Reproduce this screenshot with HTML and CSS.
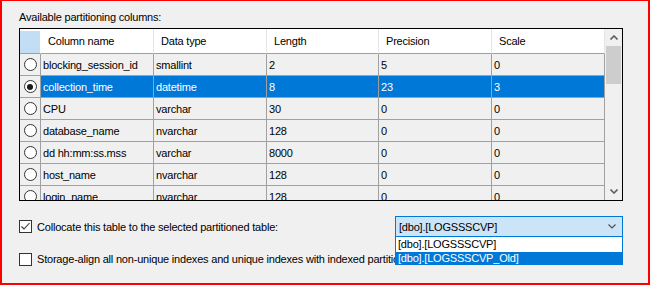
FILE: index.html
```html
<!DOCTYPE html>
<html lang="en">
<head>
  <meta charset="UTF-8">
  <title>Partitioning columns</title>
  <link rel="stylesheet" href="styles.css">
</head>
<body>
  <div class="page">
    <div class="caption">Available partitioning columns:</div>

    <div class="grid">
      <div class="grid__body">
        <div class="grid__row grid__row--head">
          <div class="cell cell--corner"></div>
          <div class="cell">Column name</div>
          <div class="cell">Data type</div>
          <div class="cell">Length</div>
          <div class="cell">Precision</div>
          <div class="cell">Scale</div>
        </div>
        <div class="grid__row">
          <div class="cell cell--radio"><span class="radio"></span></div>
          <div class="cell">blocking_session_id</div>
          <div class="cell">smallint</div>
          <div class="cell">2</div>
          <div class="cell">5</div>
          <div class="cell">0</div>
        </div>
        <div class="grid__row grid__row--selected">
          <div class="cell cell--radio"><span class="radio radio--on"></span></div>
          <div class="cell">collection_time</div>
          <div class="cell">datetime</div>
          <div class="cell">8</div>
          <div class="cell">23</div>
          <div class="cell">3</div>
        </div>
        <div class="grid__row">
          <div class="cell cell--radio"><span class="radio"></span></div>
          <div class="cell">CPU</div>
          <div class="cell">varchar</div>
          <div class="cell">30</div>
          <div class="cell">0</div>
          <div class="cell">0</div>
        </div>
        <div class="grid__row">
          <div class="cell cell--radio"><span class="radio"></span></div>
          <div class="cell">database_name</div>
          <div class="cell">nvarchar</div>
          <div class="cell">128</div>
          <div class="cell">0</div>
          <div class="cell">0</div>
        </div>
        <div class="grid__row">
          <div class="cell cell--radio"><span class="radio"></span></div>
          <div class="cell">dd hh:mm:ss.mss</div>
          <div class="cell">varchar</div>
          <div class="cell">8000</div>
          <div class="cell">0</div>
          <div class="cell">0</div>
        </div>
        <div class="grid__row">
          <div class="cell cell--radio"><span class="radio"></span></div>
          <div class="cell">host_name</div>
          <div class="cell">nvarchar</div>
          <div class="cell">128</div>
          <div class="cell">0</div>
          <div class="cell">0</div>
        </div>
        <div class="grid__row">
          <div class="cell cell--radio"><span class="radio"></span></div>
          <div class="cell">login_name</div>
          <div class="cell">nvarchar</div>
          <div class="cell">128</div>
          <div class="cell">0</div>
          <div class="cell">0</div>
        </div>
      </div>

      <div class="scrollbar">
        <div class="scrollbar__btn">
          <svg width="8" height="5" viewBox="0 0 8 5"><polyline points="0.5,4.5 4,1 7.5,4.5" fill="none" stroke="#606060" stroke-width="1.6"/></svg>
        </div>
        <div class="scrollbar__track"><div class="scrollbar__thumb"></div></div>
        <div class="scrollbar__btn">
          <svg width="8" height="5" viewBox="0 0 8 5"><polyline points="0.5,0.5 4,4 7.5,0.5" fill="none" stroke="#606060" stroke-width="1.6"/></svg>
        </div>
      </div>
    </div>

    <div class="option option--collocate">
      <div class="check">
        <span class="check__box">
          <svg width="11" height="11" viewBox="0 0 11 11"><polyline points="1.5,5.5 4,8 9.5,2" fill="none" stroke="#333" stroke-width="1.1"/></svg>
        </span>
        Collocate this table to the selected partitioned table:
      </div>
      <div class="combo">
        <div class="combo__field">
          <span>[dbo].[LOGSSSCVP]</span>
          <svg width="8" height="5" viewBox="0 0 8 5"><polyline points="0.5,0.5 4,4 7.5,0.5" fill="none" stroke="#505050" stroke-width="1.2"/></svg>
        </div>
        <ul class="combo__list">
          <li class="combo__item">[dbo].[LOGSSSCVP]</li>
          <li class="combo__item combo__item--active">[dbo].[LOGSSSCVP_Old]</li>
        </ul>
      </div>
    </div>

    <div class="option">
      <div class="check check--under-list">
        <span class="check__box"></span>
        Storage-align all non-unique indexes and unique indexes with indexed partition column
      </div>
    </div>
  </div>
</body>
</html>
```

FILE: styles.css
```css
body {
  margin: 0;
  background: #f0f0f0;
  font-family: "Liberation Sans", Arial, sans-serif;
  font-size: 11px;
  letter-spacing: -0.2px;
  color: #000;
}
.page {
  width: 650px;
  height: 285px;
  box-sizing: border-box;
  border: 2px solid #ff0000;
  border-top-width: 1px;
  padding: 8px 0 0 17px;
  overflow: hidden;
}
.caption {
  line-height: 16px;
  margin-bottom: 3px;
}

/* data grid */
.grid {
  display: flex;
  width: 604px;
  height: 173px;
  box-sizing: border-box;
  border: 1px solid #000;
  overflow: hidden;
}
.grid__body {
  flex: 1;
  overflow: hidden;
}
.grid__row {
  display: grid;
  grid-template-columns: 21px 113px 113px 112px 113px 113px;
  height: 22px;
}
.cell {
  display: flex;
  align-items: center;
  box-sizing: border-box;
  padding-left: 2px;
  border-right: 1px solid #a0a0a0;
  border-bottom: 1px solid #a0a0a0;
  white-space: nowrap;
  overflow: hidden;
}
.grid__row--head {
  height: 25px;
  background: #fff;
}
.grid__row--head .cell {
  padding-left: 7px;
  border-right-color: #e5e5e5;
}
.grid__row--head .cell--corner {
  background: #c3ddf4;
  border-right-color: #fff;
  border-top: 2px solid #fff;
}
.grid__row--selected .cell {
  background: #0078d7;
  color: #fff;
}
.grid__row--selected .cell--radio {
  background: #f0f0f0;
}
.cell--radio {
  justify-content: center;
  padding-left: 0;
}
.radio {
  width: 13px;
  height: 13px;
  box-sizing: border-box;
  border: 1px solid #333;
  border-radius: 50%;
  background: #fff;
  display: flex;
  align-items: center;
  justify-content: center;
}
.radio--on::after {
  content: "";
  width: 6px;
  height: 6px;
  border-radius: 50%;
  background: #1a1a1a;
}

/* scrollbar */
.scrollbar {
  width: 17px;
  display: flex;
  flex-direction: column;
  background: #f0f0f0;
}
.scrollbar__btn {
  height: 17px;
  display: flex;
  align-items: center;
  justify-content: center;
}
.scrollbar__track {
  flex: 1;
  padding: 0 1px;
}
.scrollbar__thumb {
  height: 38px;
  background: #cdcdcd;
}

/* options below the grid */
.option {
  display: flex;
  align-items: center;
  width: 604px;
  height: 16px;
  margin-top: 14px;
}
.option--collocate {
  justify-content: space-between;
  height: 21px;
  margin-top: 15px;
}
.check {
  display: flex;
  align-items: center;
  gap: 5px;
  white-space: nowrap;
}
.check--under-list {
  max-width: 376px;
  overflow: hidden;
}
.check__box {
  flex: none;
  width: 13px;
  height: 13px;
  box-sizing: border-box;
  border: 1px solid #333;
  background: #fff;
  display: flex;
  align-items: center;
  justify-content: center;
}

/* combo box with open list */
.combo {
  position: relative;
  width: 228px;
}
.combo__field {
  height: 21px;
  box-sizing: border-box;
  border: 1px solid #0078d7;
  background: #cce4f7;
  display: flex;
  align-items: center;
  justify-content: space-between;
  padding: 0 6px 0 3px;
}
.combo__list {
  position: absolute;
  z-index: 1;
  top: 100%;
  left: 0;
  right: 0;
  margin: 0;
  padding: 0;
  list-style: none;
  border: 1px solid #0078d7;
  border-top: none;
}
.combo__item {
  height: 15px;
  line-height: 14px;
  padding-left: 2px;
  background: #fff;
}
.combo__item--active {
  height: 12px;
  line-height: 12px;
  background: #0078d7;
  color: #fff;
}
```
